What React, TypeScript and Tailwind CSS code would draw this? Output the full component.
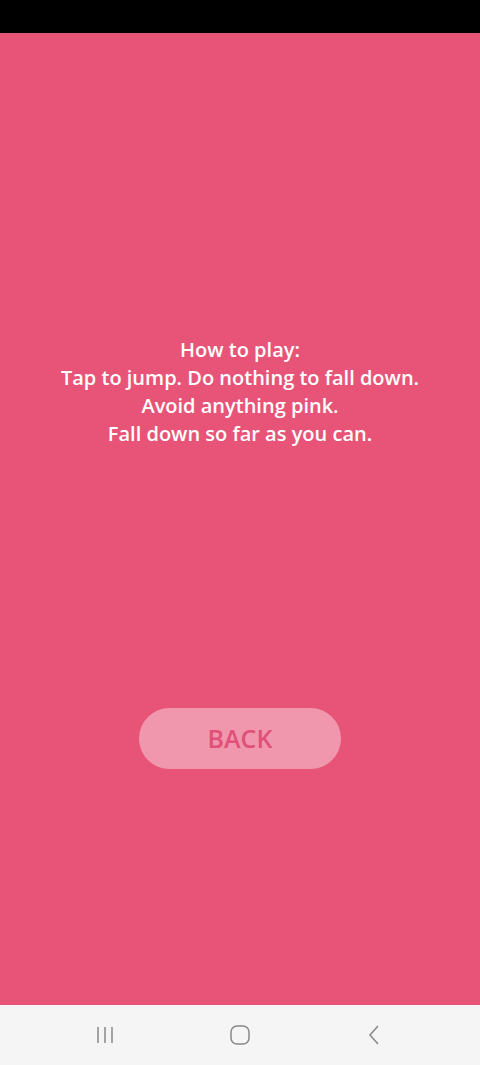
import React from "react";

const App = () => {
  return (
    <div className="w-[480px] h-[1065px] flex flex-col bg-black" style={{ fontFamily: '"Open Sans", "Liberation Sans", sans-serif' }}>
      <div className="h-[33px] bg-black" />
      <div className="flex-1 bg-[#e75477] flex flex-col items-center">
        <div className="mt-[303px] text-white font-semibold text-[20px] leading-[28px] text-center">
          <p>How to play:</p>
          <p>Tap to jump. Do nothing to fall down.</p>
          <p>Avoid anything pink.</p>
          <p>Fall down so far as you can.</p>
        </div>
        <button className="mt-[260px] w-[202px] h-[61px] rounded-full bg-[#f097ad] text-[#e05079] text-[25px] font-semibold">
          BACK
        </button>
      </div>
      <div className="h-[60px] bg-[#f5f5f5] flex items-center justify-center gap-[111px]">
        <svg width="24" height="24" viewBox="0 0 24 24" fill="none" stroke="#888" strokeWidth="1.5">
          <path d="M5 4v16M12 4v16M19 4v16" />
        </svg>
        <svg width="24" height="24" viewBox="0 0 24 24" fill="none" stroke="#888" strokeWidth="1.5">
          <rect x="3" y="3" width="18" height="18" rx="6" />
        </svg>
        <svg width="24" height="24" viewBox="0 0 24 24" fill="none" stroke="#888" strokeWidth="1.5">
          <path d="M15 3l-8 9 8 9" />
        </svg>
      </div>
    </div>
  );
};

export default App;
